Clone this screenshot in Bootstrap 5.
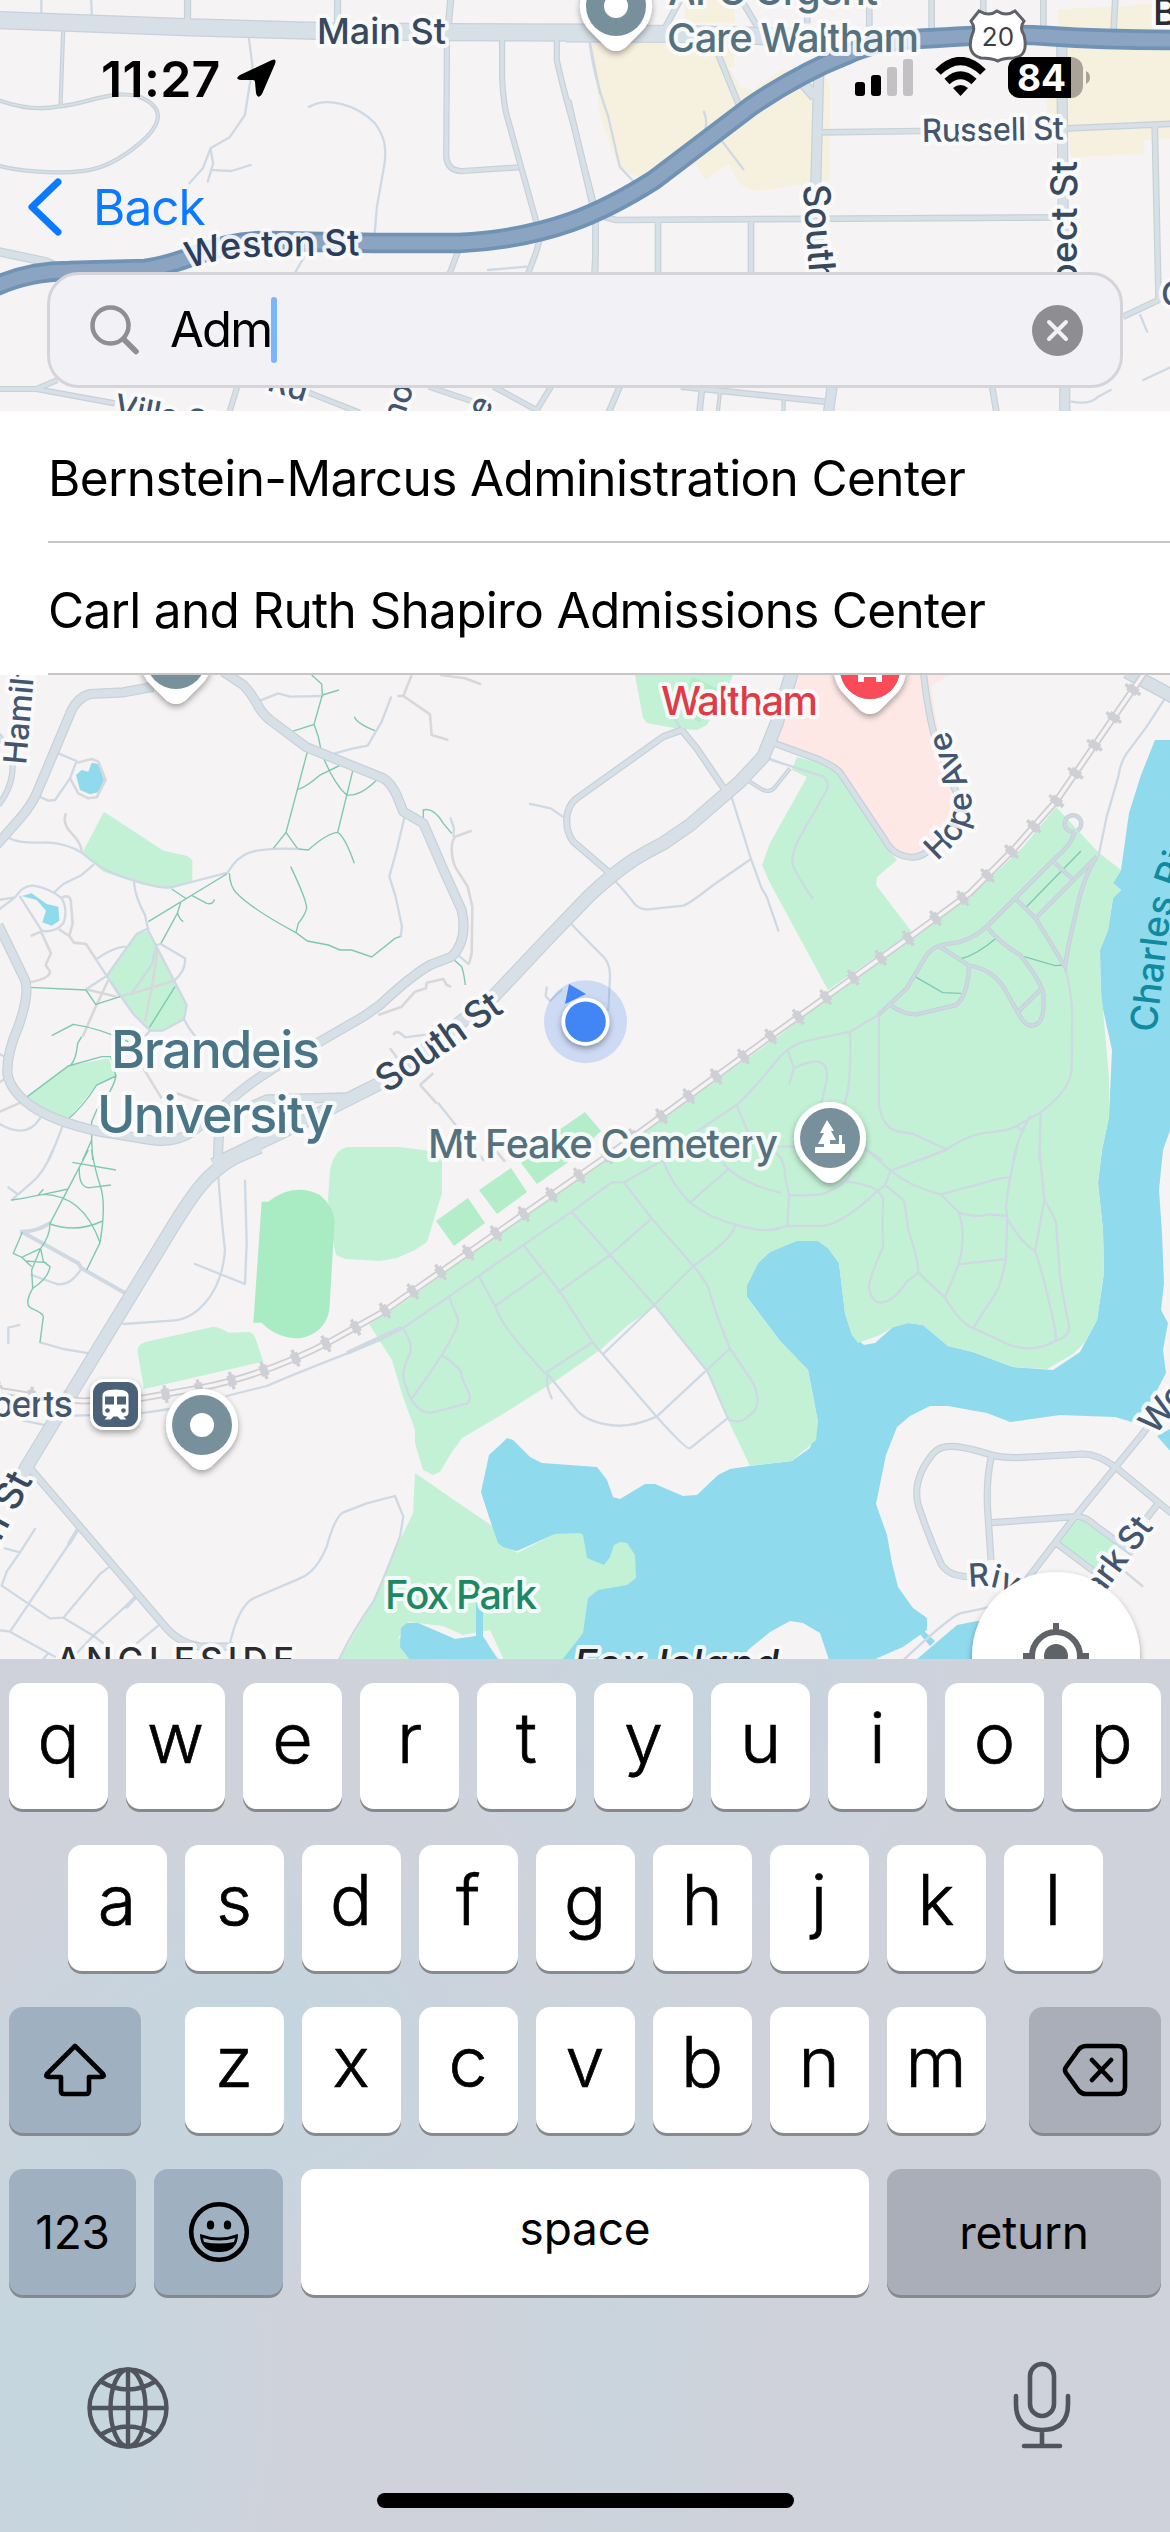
<!DOCTYPE html>
<html lang="en">
<head>
<meta charset="utf-8">
<meta name="viewport" content="width=device-width, initial-scale=1">
<title>Campus map search</title>
<link rel="stylesheet" href="https://cdn.jsdelivr.net/npm/bootstrap@5.3.0/dist/css/bootstrap.min.css">
<style>
body{font-family:Inter,"Liberation Sans",sans-serif;color:#000;background:#f5f3f4}
.screen{width:1170px;height:2532px}
.map-layer{left:0;top:0;width:1170px;height:1659px}
.statusbar{height:146px;padding:0 79px 0 101px}
.clock{font-size:50px;font-weight:600;letter-spacing:.3px;line-height:60px;margin-top:49px}
.batt{left:0;top:0;width:63px;font-size:37px;font-weight:700;line-height:41px;color:#fff;text-align:center}
.backbar{height:127px;padding:31px 0 0 27px}
.backlink{color:#0a7aff;font-size:49.5px;letter-spacing:-1px;line-height:60px;text-decoration:none;gap:30px}
.searchbox{height:116px;margin:-1px 47px 0;padding:0 37px 0 40px;border:3px solid #d5d4d9;border-radius:32px;background:#f2f1f6}
.query{font-size:49px;line-height:60px;letter-spacing:-1.8px;margin-left:30px}
.caret{width:6px;height:66px;border-radius:3px;background:#7bb5fc}
.results{margin-top:23px;background:#fff}
.results .list-group-item{height:132px;padding:3px 0 0;margin-left:48px;border:0;border-bottom:2px solid #c6c6c8!important;font-size:49.5px;line-height:60px;color:#000;background:#fff;display:flex;align-items:center;white-space:nowrap}
.results .list-group-item:nth-child(1) span{letter-spacing:-.62px}
.results .list-group-item:nth-child(2) span{letter-spacing:-.69px}
.keyboard{height:873px;padding:24px 9px 0;background:
 radial-gradient(ellipse 330px 290px at 690px 30px,#c7d5df 0,#c7d5df00 100%),
 radial-gradient(ellipse 330px 260px at 260px 400px,#c5d5df 20%,#c5d5df00 100%),
 radial-gradient(ellipse 260px 430px at 50px 720px,#c6d6df 20%,#c6d6df00 100%),
 radial-gradient(ellipse 170px 500px at 610px 600px,#c8d5dd 0,#c8d5dd00 100%),#d0d2db}
.krow{height:126px;margin-bottom:36px}
.keycap{width:99px;height:126px;border-radius:14px;background:#fff;box-shadow:0 3px 0 #868a8e;font-size:70px;font-weight:300;-webkit-text-stroke:.7px #000;line-height:1;padding-bottom:17px}
.kmod{background:#9fb1c1;padding-bottom:0}
.kgray{background:#a9aeb9;padding-bottom:0}
.wide{font-size:46px;font-weight:400;-webkit-text-stroke:0;letter-spacing:-.2px}
.homebar{left:377px;bottom:24px;width:417px;height:15px;border-radius:8px;background:#000}
.map-layer path,.map-layer polygon{vector-effect:non-scaling-stroke}
.lines{fill:none;stroke-linejoin:round;stroke-linecap:butt}
#roads path{stroke-width:calc(var(--w,7px) + var(--e,0px))}
.thin{fill:none;stroke:#cfd9e3;stroke-width:2.3;stroke-linejoin:round;stroke-linecap:round}
.walk{fill:none;stroke:#d8d8db;stroke-width:2.6;stroke-linejoin:round}
.trail{fill:none;stroke:#7fc9b0;stroke-width:1.4}
.lbl text{paint-order:stroke;stroke:#fbfcfd;stroke-opacity:.88;stroke-width:8px;stroke-linejoin:round;font-weight:500}
</style>
<script src="https://cdn.jsdelivr.net/npm/bootstrap@5.3.0/dist/js/bootstrap.bundle.min.js"></script>
</head>
<body class="m-0">
<main class="screen position-relative overflow-hidden d-flex flex-column">

<svg class="map-layer position-absolute" viewBox="0 0 1170 1659" overflow="hidden" aria-label="Map of Brandeis University">
<defs>
<filter id="sh" x="-30%" y="-30%" width="160%" height="160%"><feDropShadow dx="0" dy="3" stdDeviation="3" flood-color="#000" flood-opacity=".35"/></filter>
<g id="pin"><path d="M0-36A36 36 0 0 1 26 25L10 41Q0 49-10 41L-26 25A36 36 0 0 1 0-36Z" fill="#fff" filter="url(#sh)"/><circle r="30" fill="#78909c"/></g>
<g id="roads">
 <g transform="scale(.38268 .33333)">
  <path style="--w:17px" d="M-10 60L500 82 900 95 1600 98"/>
  <path style="--w:6px" d="M490-5V60M882-5V75M1178-5L1172 70"/>
  <path style="--w:3px" d="M165 95L158 320M-5 300Q80 335 150 320C240 310 280 270 360 288C430 320 430 370 360 435C290 500 240 520 140 517Q50 515-5 497"/>
  <path style="--w:5px" d="M1168 120L1166 470Q1170 515 1210 513L1355 502M1312 120V230Q1315 320 1330 370L1405 680M1455 120V180Q1470 260 1500 380L1555 625M1556 655V825M1200 745L1175 820M1412 712L1400 760 1380 820M-5 1167H95L150 1140M95 1167L300 1210M620 1160L600 1235M800 1175L940 1238M1120 1160L1250 1210M1290 1160L1410 1235M1440 1160L1400 1235"/>
  <path style="--w:8px" d="M-5 755L120 785 170 812"/>
 </g>
 <g transform="translate(570 0) scale(.38268 .33333)">
  <path style="--w:17px" d="M-10 100L300 102 640 112"/>
  <path style="--w:5.500px" d="M388 165L445 325M-5 300L60 620M67 655V760L64 820M230 665V820M473 665V820M90 650L120 660 1280 652M655 397L920 393M1300 385L1600 370M1528 378L1538 900 1445 950M945-5V95M1080-5V40M1237-5V90M1425-5L1420 100M620-5V70M782-5V80M290-5L250 80M445-5L490 80M130 1160L100 1240M345 1165L338 1240M290 1160L665 1205M1103 1160L1115 1240"/>
  <path style="--w:3px" d="M392 1175L386 1240M558 1200V1240"/>
  <path style="--w:10px" d="M650 215L640 650 660 830M605 245L640 290M1285 130L1290 830M685 1160L675 1240M1293 1160V1240"/>
 </g>
 <g transform="translate(0 660) scale(.33333)">
  <path style="--w:9px" d="M460 80L370 97 270 102Q235 112 215 150L110 400Q95 435 60 475L-10 555M670 35L730 75Q750 95 770 130Q785 160 810 180L920 262 1150 355Q1170 365 1190 405L1210 455 1270 490 1335 640 1385 750Q1405 840 1355 890L1290 915Q1230 950 1140 1035L1090 1070 960 1145 820 1225Q740 1275 680 1330M-5 795L75 960Q90 1000 55 1100Q20 1180 22 1240Q30 1290 90 1335Q160 1385 300 1415L450 1440Q520 1450 570 1420Q620 1385 680 1330Q650 1380 655 1540M740 1345L800 1318 1040 1312"/>
  <path style="--w:13px" d="M640 1515L900 1390 1060 1310 1160 1260 1480 1010 1640 840 1770 705Q1840 640 1900 600Q1940 575 1990 550L2070 495 2220 365 2290 290 2330 190 2375 40"/>
  <path style="--w:5px" d="M-5 435Q40 380 38 310M-5 225L20 260"/>
 </g>
 <g transform="translate(380 660) scale(.33333)">
  <path style="--w:6px" d="M905 210L850 230 590 415Q560 440 560 480Q560 520 580 545L690 640M905 210L950 265 1035 390"/>
  <path style="--w:3px" d="M1105 362L1140 385Q1170 405 1190 375L1230 325"/>
 </g>
 <g transform="translate(770 660) scale(.33333)">
  <path style="--w:6px" d="M460 35Q475 170 500 250L560 400M0 245L150 300Q205 325 215 345L345 540Q370 590 430 592Q460 590 490 560"/>
  <path style="--w:13px" d="M1070 35L1210 110"/>
 </g>
 <g transform="translate(0 1150) scale(.33333)">
  <path style="--w:13px" d="M780-10L700 25Q640 60 600 110Q560 160 500 260L80 950 50 1010"/>
  <path style="--w:7px" d="M90 955L500 1435Q540 1480 600 1490L700 1490"/>
  <path style="--w:6px" d="M656-5L650 60"/>
 </g>
 <g transform="translate(770 1150) scale(.33333)">
  <path style="--w:6px" d="M1180 770L1115 855 915 1100 770 1290M665 915Q600 895 560 890Q510 885 490 910Q440 970 440 1030Q440 1060 455 1095Q480 1170 515 1245Q540 1280 600 1280M665 915Q700 925 760 922L940 912Q980 912 1035 950L1205 1090M665 915Q645 1000 655 1110L663 1230M665 1118L915 1100Q940 1095 980 1130L1090 1210M860 1180L980 1270M1165 1060L1130 1105"/>
 </g>
</g>
<g id="lanes" transform="translate(770 660) scale(.33333)">
 <path d="M915 515Q900 560 860 590L735 715 650 800Q600 845 545 850Q490 855 470 885L410 985 325 1065M915 515A25 25 0 1 1 922 512M845 600L905 655M980 590L797 775 735 715M980 590Q940 650 920 750Q895 850 885 920L797 775M650 800Q690 850 750 885Q810 960 820 1000Q825 1080 800 1092Q770 1110 745 1060L700 980Q660 925 597 917L510 860M597 917Q595 1000 560 1035L440 1063Q400 1065 358 1033M745 1055L815 985"/>
</g>
<g id="hwy"><path d="M-4 286Q30 271 69 271L145 269C191 263 214 240 268 241L375 243 459 243Q520 240 571 222Q610 208 654 180L750 107Q800 73 846 55Q876 40 934 38Q1010 33 1048 36Q1106 40 1180 40"/></g>
<path id="rail" d="M-4 1390L40 1397 83 1401 143 1398 200 1388Q267 1375 333 1340L383 1312 603 1159 770 1037 910 937 970 893 1013 850 1057 800 1103 733 1143 675 1165 640"/>
<path id="pWeston" d="M189 269Q217 259 247 257L372 255"/>
<path id="pHope" d="M937 861C962 838 975 822 971 797C968 777 956 757 949 730Q945 715 943 695"/>
<path id="pRiver" d="M969 1587L985 1586Q1002 1588 1018 1598L1050 1620"/>
<path id="pCharles" d="M1156 1033L1169 925Q1180 870 1220 790"/>
</defs>
<rect width="1170" height="1659" fill="#f5f3f4"/>

<!-- commercial, hospital and park areas -->
<g transform="translate(570 0) scale(.38268 .33333)" fill="#f6f0df">
 <path d="M55 130H430V200H415L445 260 480 270 550 210H660L680 270 678 540 485 575 440 550 415 490 355 540 330 495 180 530 130 510 80 350ZM1275 28L1450 18 1600 0V415L1500 420V462L1310 472 1300 400 1250 390 1245 300 1280 280ZM300-5H430V70H300Z"/>
</g>
<path d="M797 675H950L931 686Q937 737 957 800Q943 847 917 857Q897 855 887 842L840 773 777 743Z" fill="#fde8e6"/>
<g fill="#c3f1d6">
 <g transform="translate(0 660) scale(.33333)"><path d="M312 455L490 572 560 587 577 600V662L510 687 430 675 310 635 247 578ZM410 822L445 812 560 1035 552 1078 487 1112H450L400 1062 320 948ZM75 1315L205 1218 325 1195 350 1248 290 1275 200 1383Z"/></g>
 <path d="M635 675H733L728 687 707 725 697 730 680 729 647 723 643 718ZM797 757L833 767 842 780 890 852 897 860 877 877 876 885 912 932 828 990 770 883 762 865 770 843 807 777 792 770Z"/>
 <path d="M328 1200L330 1170Q335 1147 350 1147H400L430 1151 442 1160V1193L427 1242 415 1250 397 1258 380 1261 345 1259 336 1255 333 1240Z"/>
 <g transform="translate(0 1150) scale(.33333)"><path d="M412 600Q415 580 440 575L640 530Q660 532 685 548L745 546Q762 548 768 570L790 635 432 717Z"/></g>
 <path d="M415 1473L457 1502 498 1530 517 1553 583 1520 640 1540V1583L595 1659H340L373 1602 400 1540 413 1513Z"/>
</g>
<g fill="#b3edc9"><path d="M692 677L717 688 700 723 680 710ZM468 1198L485 1223 454 1246 436 1221ZM511 1168L527 1192 497 1214 479 1190ZM585 1112L601 1131 567 1163 537 1184 521 1163 562 1128Z"/></g>
<path transform="translate(0 1150) scale(.33333)" d="M785 155H805Q880 95 960 135Q1000 170 1004 210L988 480Q975 550 900 565Q830 565 785 518H760Z" fill="#a9ebc3"/>

<!-- Charles River and ponds -->
<g fill="#90daee">
 <path d="M1172 740H1155L1141 775 1129 813 1121 870 1113 883 1121 890 1113 898 1108 930 1100 950 1101 1000 1112 1050 1109 1117 1102 1150 1098 1183 1103 1230 1104 1273 1097 1320 1080 1352 1053 1370 1013 1367 973 1352 948 1346 923 1325 908 1323 893 1327 875 1343 864 1345 852 1335 845 1313 839 1263 828 1248 818 1241 797 1240 770 1252 758 1263 747 1285V1297L780 1341 808 1370 818 1422 810 1448 792 1461 750 1466 730 1469 718 1475 697 1495 683 1496 655 1484H645L620 1499 613 1497 607 1480 597 1467 542 1463 530 1457 513 1440 507 1438 500 1445 489 1455 481 1492 490 1520 498 1543 503 1547 517 1551 555 1534 580 1533 583 1535 587 1558 604 1565 610 1557 614 1545 620 1542 627 1543 635 1555 636 1578 627 1585 598 1590 588 1598 583 1633 562 1660H743L748 1650 770 1632 790 1621 803 1623 820 1633 829 1660H873L903 1647 927 1630V1618L913 1608 898 1587 892 1563 887 1535 876 1504 886 1455 897 1427 910 1416 930 1406H948L987 1413 1010 1422 1060 1415 1115 1417 1132 1422 1153 1398 1166 1373 1163 1350 1168 1323 1161 1310 1164 1283 1162 1233 1159 1190 1163 1150 1172 1125Z"/>
 <path d="M1157 1436L1172 1428V1453ZM916 1660L957 1625 977 1621H1010V1660ZM919 1633L923 1630 935 1641 930 1646Z"/>
 <g transform="translate(0 660) scale(.33333)"><path d="M228 345L245 330 265 335 275 308 295 312 312 360 295 397 270 403 240 390ZM65 708L95 700 140 732 175 740 178 782 155 797 127 787 138 752 110 720Z"/></g>
</g>
<path d="M397 1640L408 1622 443 1626 463 1635 490 1630 504 1660H500L480 1636 455 1639 418 1623Z" fill="#f5f3f4"/>
<path d="M407 1623H418L455 1639 476 1636V1603H483V1636L498 1660H410L400 1647 401 1628Z" fill="#90daee"/>

<path d="M1056 807L1098 852 1121 870 1113 883 1121 890 1113 898 1108 930 1100 950V977L1109 1077V1117L1102 1150 1098 1183 1103 1230 1104 1273 1097 1320 1085 1342 1073 1354 1047 1369 1013 1367 973 1352 948 1346 923 1325 908 1323 893 1327 880 1335 858 1343 852 1335 845 1313 839 1263 828 1248 818 1241H797L770 1252 758 1263 747 1285V1297L780 1341 808 1370 818 1422 816 1440 792 1461 750 1466 728 1420 708 1372 677 1332 655 1307 628 1325 600 1350 557 1380 498 1417 462 1438 450 1455 440 1472 433 1475 423 1470 415 1443V1430L403 1397 392 1360 369 1324 400 1305 603 1161 780 1035 828 996 912 939 970 897 1023 847Z" fill="#c3f1d6"/>
<path transform="translate(770 1150) scale(.33333)" d="M865 1175L920 1110H945L1045 1190 985 1262Z" fill="#c3f1d6"/>

<!-- service roads, footpaths and trails -->
<g transform="scale(.38268 .33333)" class="thin"><path d="M108-5V40M238-5L240 48M650 110L660 200 640 345 600 412 550 445 530 505 495 550M550 445L557 490 543 545M555 510L605 513 655 495M807 321C850 290 930 310 980 370C1005 410 1010 440 1005 490L985 620 978 715M1540 120L1568 280M795 770L770 820M1275 810L1375 800"/></g>
<g transform="translate(570 0) scale(.38268 .33333)" class="thin"><path d="M52 130Q60 220 100 350L130 500 172 552M350 335Q362 370 350 400M390 412L453 508M1490 945L1508 995M1310 1205Q1360 1215 1380 1190L1413 1170M1498 1140L1600 1085"/></g>
<g transform="translate(0 660) scale(.33333)">
 <path class="thin" d="M175 280L230 303 210 355 165 420 145 422 118 410M28 535Q60 552 140 547Q200 550 245 578Q300 625 340 640Q400 662 450 675Q500 690 540 675L683 638Q710 590 750 577Q800 562 895 567M280 615L245 645 190 672 165 695M-5 720L45 712-5 750M45 712Q70 675 100 677Q150 685 185 715Q205 750 190 790Q165 820 125 812L60 710M402 668Q405 710 435 765L445 812 560 1035 552 1078 487 1112H450L400 1062 320 948 410 822 445 805M375 860Q340 862 288 898M320 948L258 988M470 855L482 852 555 895Q558 930 525 960M469 858L455 915 395 1000 360 1010M552 1078Q565 1105 585 1128M450 1112L430 1135M780 122L835 100 870 110 968 108M1173 112L1145 185 1103 257 1060 265 1005 280M-5 1180L15 1190M-5 1270L15 1255M-5 1390Q80 1440 120 1375M187 1400Q170 1450 145 1500M288 898L360 1010"/>
 <path class="walk" d="M232 308L275 297 295 305 317 360 290 412 265 415 235 400 210 355M198 460Q185 490 215 520Q245 550 245 578M185 713Q213 700 213 730L218 790 208 828 177 808M208 828L222 848 258 852 288 898M123 815L153 880 137 915 150 935Q150 955 88 967M92 828L123 815M473 870L455 985 435 1085M390 1003L522 962M325 960L285 1045 248 1130M258 988L350 1010M430 1225L485 1315M530 1300L600 1325M-5 1357L75 1322"/>
 <path class="trail" d="M935 45L965 72 967 105 942 193 875 215M967 105L1017 90M942 193L955 230 965 280Q1000 370 1040 405Q1080 410 1130 360M923 272L858 517 820 565M858 517L892 565M895 388Q920 380 960 345L1028 312M1060 325L1013 517Q980 520 925 570L895 567M1013 517Q1035 530 1063 610M1063 170Q1070 190 1125 212M872 620Q920 720 920 745Q915 765 895 790L888 818M688 640Q690 680 710 700Q760 750 888 818L922 843 985 855 1020 870H1055L1115 891 1185 835 1205 828M680 642L445 785M515 687L560 717M575 706L620 730Q640 735 643 718M542 728L532 760 483 850M532 757Q538 778 550 785M88 982L258 990 287 1033 360 1010M155 1127L220 1093Q300 1105 385 1145M525 980L448 1103M75 1315L205 1218 305 1190H332L348 1248 290 1275Q250 1340 197 1384M245 1130L233 1150Q228 1200 212 1215M348 1248Q340 1290 290 1350L275 1385V1440L278 1500M275 1440L248 1500"/>
</g>
<g transform="translate(380 660) scale(.33333)">
 <path class="thin" d="M885 178L905 210M450 432L512 445 548 470M705 662Q740 700 765 733Q780 750 805 748L910 737Q930 730 1000 675L1113 597M1055 412L1113 597 1145 685 1160 710 1195 812M577 795Q610 830 660 880Q692 905 690 950L685 1050M500 982L497 1008 510 1023 545 990M75 465L50 570 28 650 47 710 66 800 62 828M212 475L222 505 220 528M230 882L265 912M75 1132L165 1120M175 1330L310 1500M1165 295L1210 312M1200 1190Q1120 1290 1070 1335L950 1415 840 1490M1070 1335L1105 1420"/>
 <path class="walk" d="M95 45L70 108H52M70 108L150 163 155 225 205 240M180 45L255 55 303 73M275 512L225 530Q205 560 225 620L263 680 277 740 275 880 267 912M-5 1065L65 1040 105 995 138 985 140 968 190 957 200 975 213 980M40 1125Q50 1105 75 1132M30 1165L60 1205M120 1275L170 1330M120 1275L160 1240M350 1475L375 1505"/>
 <path class="trail" d="M130 480V450Q160 440 190 490L215 520M217 895L245 920Q252 940 256 975"/>
</g>
<g transform="translate(770 660) scale(.33333)">
 <path class="thin" d="M0 298L160 350Q180 370 170 390L85 540Q60 590 70 620Q90 660 127 715M1185 115L1130 200 1070 280Q1050 310 1045 350L1010 470 985 590M325 1065L240 1115 100 1145Q50 1160 0 1225M240 1115Q245 1280 222 1335M327 1065V1330Q335 1400 380 1413L430 1422 530 1468 450 1500M530 1468Q600 1420 660 1417L710 1410Q740 1400 815 1355Q900 1290 905 1230L907 1060Q905 1000 885 920M780 1370Q740 1440 730 1500M740 1400L760 1412M812 1355L808 1500M52 1168L72 1225 58 1270M72 1225Q180 1170 170 1260L155 1325M285 1465L335 1500M0 1460H80"/>
 <path class="trail" d="M933 573L768 742M763 890L855 917 885 915M680 833Q620 885 570 897M435 950L518 998 573 1000"/>
</g>
<g transform="translate(0 1150) scale(.33333)">
 <path class="thin" d="M160 0Q130 70 95 98L35 150M25 112L52 132M655 80Q665 220 675 300Q670 380 630 440Q580 510 515 512L370 522M735 92L740 280 735 402 585 342M95 375L170 402Q210 410 245 355M25 580V533L58 525M120 577L190 597 268 610M225 797L420 790 510 777M680 738L800 708Q900 665 1050 607T1200 535M70 812L140 826M105 1137L60 1207 20 1265 5 1307 150 1405 190 1403 280 1457 310 1480M15 1195L60 1207M232 1140L205 1185 30 1445M-5 1440L30 1445 165 1520M325 1253L300 1272 190 1403M405 1343L280 1457 230 1510M475 1427L410 1480M690 1480Q715 1370 760 1345L900 1285Q950 1265 980 1190Q1005 1100 1030 1087L1100 1060 1185 1038 1210 1100 1200 1160Q1150 1290 1120 1355Q1060 1440 1018 1527M130 1527L145 1510"/>
 <path class="thin" style="stroke-width:4" d="M65 245Q110 245 148 220M65 245L235 340 245 355 380 432M1045 607L1200 535M232 1140L208 1180M405 1343L380 1370"/>
 <path class="trail" d="M265 0L205 115 150 220Q150 260 122 295L65 322 40 310 67 247M275 0Q285 60 300 105Q320 160 300 278L260 360M217 37L348 60M238 50Q235 115 270 113L333 105M35 150Q70 145 130 133L205 117M115 135L130 118M130 133Q250 135 300 278M150 222Q230 250 308 213M122 295L95 360 98 415Q70 465 95 475Q130 490 130 500L120 577M122 295L130 335 150 350Q145 385 98 415M80 333L140 338M65 322L95 350"/>
</g>
<g transform="translate(380 1150) scale(.33333)" class="thin"><path d="M-5 572L68 535 575 185 695 97H732L850 30M68 535Q100 580 90 610Q60 670 75 700Q100 790 155 788L262 760Q275 745 265 725Q245 690 243 665Q225 640 185 615M208 443L235 510Q230 560 98 742M297 378L345 468Q360 510 400 560Q450 620 495 670L635 578M345 468L485 370M430 285L540 425 640 580 830 800Q920 900 930 895L1045 803M535 427L690 315 815 205 732 97M575 185L823 465M815 205L940 348Q985 400 990 430Q1010 500 1050 595L1120 700Q1150 770 1110 795Q1080 825 1045 808L983 665 823 465 940 348Q1060 265 1065 225M850 35Q880 110 930 158Q990 205 1065 223Q1150 250 1200 235M930 158L1045 57Q1110 110 1200 127M1045 57L1030 40M823 465L670 612M1050 595L830 800Q750 835 690 825Q620 815 590 780L503 672Q495 700 515 745"/></g>
<g transform="translate(770 1150) scale(.33333)" class="thin"><path d="M20 10Q45 30 45 80L57 135 52 228 0 240M57 135Q150 140 175 125Q250 90 240 60M52 228H160Q220 220 320 125L345 105 362 62 530 0M290 0L362 62Q420 110 512 133L690 85 720 82M230 95Q330 105 340 150Q335 220 340 290Q290 400 298 420Q310 460 335 458Q370 455 410 395L445 368Q445 330 415 240Q405 160 400 150Q390 140 345 105M445 368L525 443Q565 510 600 530L720 585Q790 610 855 573Q900 560 897 525Q870 400 868 350L858 220Q850 190 823 152L808 0M512 133L567 187Q590 260 565 345L525 443M567 187Q620 205 655 193L712 198M740 0Q715 90 708 170L712 198 708 327 565 343M708 327Q690 410 680 425L612 530M712 205Q750 275 795 303L823 152M795 303Q820 370 857 545V573M1065 1265L1117 1308M400 1530Q540 1400 570 1390L655 1372"/></g>
<use href="#lanes" fill="none" stroke="#c4d1d8" stroke-width="4.4"/><use href="#lanes" fill="none" stroke="#cdd8e1" stroke-width="2.6"/>

<!-- streets, railway and highway, each as casing plus fill -->
<use href="#roads" class="lines" stroke="#c6d1d8" style="--e:1.2px"/>
<use href="#roads" class="lines" stroke="#d7e0e7" style="--e:-1.2px"/>
<g fill="none"><use href="#rail" stroke="#cfcfd2" stroke-width="7"/><use href="#rail" stroke="#f5f3f4" stroke-width="3.4"/><use href="#rail" stroke="#cfd0d5" stroke-width="18" stroke-dasharray="3.4 30.4"/><use href="#rail" stroke="#cfd0d5" stroke-width="11" stroke-dasharray="8 25.8" stroke-dashoffset="2.3"/>
<use href="#hwy" stroke="#6f92b5" stroke-width="20.5"/><use href="#hwy" stroke="#8ba4c1" stroke-width="13"/></g>

<!-- labels -->
<g class="lbl">
 <g fill="#38495d">
 <text x="317" y="44" font-size="36" textLength="129">Main St</text>
 <text font-size="36" fill="#2c3d5c"><textPath href="#pWeston" textLength="172">Weston St</textPath></text>
 <text transform="translate(803 185) rotate(86)" font-size="37" textLength="100">South</text>
 <text transform="translate(1077 161) rotate(-90)" font-size="37" text-anchor="end">Prospect St</text>
 <text transform="translate(387 1094) rotate(-35)" font-size="38" textLength="144">South St</text>
 <text transform="translate(33 1480) rotate(-62)" font-size="38" text-anchor="end">Main St</text>
 <text x="73" y="1417" font-size="36" fill="#44566a" text-anchor="end" textLength="123">Roberts</text>
 </g>
 <g fill="#44566f" font-size="32">
 <text transform="translate(922 142) rotate(-1)" textLength="142">Russell St</text>
 <text transform="translate(113 416) rotate(11)" textLength="104">Villa St</text>
 <text transform="translate(266 390) rotate(17)">Rd</text>
 <text transform="translate(402 424) rotate(-72)">no</text>
 <text transform="translate(468 452) rotate(-62)">oke</text>
 <text x="1161" y="306" font-size="34">Ch</text>
 <text><textPath href="#pHope" textLength="147">Hope Ave</textPath></text>
 <text transform="translate(26 765) rotate(-85)">Hamilton</text>
 <text transform="translate(1155 1436) rotate(-51)" font-size="34">Woerd</text>
 <text transform="translate(1154 1527) rotate(-53)" font-size="34" text-anchor="end" textLength="112">Park St</text>
 <text><textPath href="#pRiver">River</textPath></text>
 </g>
 <g fill="#56717e" font-size="40">
 <text x="668" y="5" textLength="210">AFC Urgent</text>
 <text x="667" y="52" textLength="252">Care Waltham</text>
 <text x="428" y="1158" textLength="350">Mt Feake Cemetery</text>
 </g>
 <g fill="#4a7587" font-size="52"><text x="111" y="1068" textLength="209">Brandeis</text><text x="97" y="1133" textLength="237">University</text></g>
 <text x="661" y="715" font-size="40" fill="#df3c48" textLength="157">Waltham</text>
 <text x="385" y="1609" font-size="40" fill="#1e8862" textLength="152">Fox Park</text>
 <text font-size="37" fill="#0f8a9f" style="stroke:none"><textPath href="#pCharles">Charles River</textPath></text>
 <text x="1153" y="25" font-size="37" fill="#2b2c33">B</text>
 <text x="56" y="1673" font-size="35" fill="#2c2c31" textLength="238">ANGLESIDE</text>
 <text x="574" y="1678" font-size="39" fill="#202228" font-style="italic" textLength="205">Fox Island</text>
</g>

<!-- US 20 shield -->
<g><path d="M979 11Q989 17 997 11Q1006 17 1015 11L1024 21Q1019 28 1024 35Q1029 56 1014 58Q1003 58 998 61Q991 58 981 58Q966 54 972 35Q976 28 971 21Z" fill="#fff" stroke="#606268" stroke-width="3"/><text x="998" y="46" font-size="26" fill="#3d3e44" text-anchor="middle">20</text></g>

<!-- markers -->
<use href="#pin" x="616" y="6"/><circle cx="616" cy="6" r="12" fill="#fff"/>
<use href="#pin" x="176" y="659"/>
<g transform="translate(870 669)"><use href="#pin"/><circle r="30" fill="#fb4a58"/><path d="M-12-15H-6V2H6V-15H12V13H6V8H-6V13H-12Z" fill="#fff"/></g>
<g transform="translate(830 1138)"><use href="#pin"/><path d="M-3-18L4-7H1L6 2H0V6H9V-3H12V6H15V15H-15V9H-6V6H-12L-6-5H-10Z" fill="#fff"/></g>
<use href="#pin" x="202" y="1425"/><circle cx="202" cy="1425" r="12" fill="#fff"/>
<g transform="translate(115.500 1404.500)"><rect x="-25.500" y="-25.500" width="51" height="51" rx="14" fill="#fff" filter="url(#sh)"/><rect x="-22.500" y="-22.500" width="45" height="45" rx="11" fill="#4a6177"/><path d="M-13-9Q-13-15 0-15T13-9V8Q13 12 8 12L11 15H5L2 12H-2L-5 15H-11L-8 12Q-13 12-13 8Z" fill="#fff"/><path d="M-10.500-8H-1.500V0H-10.500ZM1.500-8H10.500V0H1.500Z" fill="#4a6177"/><circle cx="-8" cy="6" r="2.300" fill="#4a6177"/><circle cx="8" cy="6" r="2.300" fill="#4a6177"/></g>
<circle cx="585.500" cy="1021.700" r="41.500" fill="#4285f4" opacity=".22"/>
<path d="M569 984L586 994 565 1004Z" fill="#4285f4"/><circle cx="585.500" cy="1021.700" r="24" fill="#fff" filter="url(#sh)"/><circle cx="585.500" cy="1021.700" r="20.300" fill="#4285f4"/>
<g transform="translate(1056 1656)"><circle r="84" fill="#fff" filter="url(#sh)"/><circle r="24" fill="none" stroke="#5f6368" stroke-width="6"/><circle r="12" fill="#5f6368"/><path d="M0-33V-24M0 24V33M-33 0H-24M24 0H33" stroke="#5f6368" stroke-width="6"/></g>
</svg>

<header class="position-relative">
 <div class="statusbar d-flex align-items-start">
  <span class="clock">11:27</span>
  <svg class="ms-3" style="margin-top:59px" width="40" height="39" viewBox="0 0 40 39"><path d="M3 16L35 1Q40-1 38 5L25 35Q21 41 19 34L18 23Q18 21 16 21L4 21Q-3 20 3 16Z"/></svg>
  <div class="ms-auto d-flex" style="margin-top:57px">
   <svg width="58" height="41" viewBox="0 0 58 41"><rect y="25" width="10" height="14" rx="3"/><rect x="16" y="18" width="10" height="21" rx="3"/><g fill="#c3c1c3"><rect x="32" y="10" width="10" height="29" rx="3"/><rect x="48" y="2" width="10" height="37" rx="3"/></g></svg>
   <svg style="margin-left:22px" width="51" height="41" viewBox="0 0 51 41"><path d="M3 15Q25.500-7 48 15" fill="none" stroke="#000" stroke-width="8"/><path d="M12 24.500Q25.500 12 39 24.500" fill="none" stroke="#000" stroke-width="7.500"/><path d="M18 31Q25.500 25 33 31L25.500 39Z"/></svg>
   <div class="position-relative" style="margin-left:22px"><svg width="83" height="41" viewBox="0 0 83 41" class="d-block"><rect width="75" height="41" rx="12" fill="#aba399"/><path d="M63 0H12A12 12 0 0 0 0 12V29A12 12 0 0 0 12 41H63Z"/><path d="M78 14Q82 16 82 20.500T78 27Z" fill="#aba399"/></svg><span class="batt position-absolute ps-1">84</span></div>
  </div>
 </div>
 <div class="backbar">
  <a href="#" class="backlink d-inline-flex align-items-center"><svg width="36" height="58" viewBox="0 0 36 58"><path d="M31 4L5 29L31 54" fill="none" stroke="#0a7aff" stroke-width="7" stroke-linecap="round" stroke-linejoin="round"/></svg>Back</a>
 </div>
</header>

<div class="searchbox position-relative d-flex align-items-center">
 <svg width="50" height="50" viewBox="0 0 50 50"><circle cx="20.500" cy="20.500" r="18" fill="none" stroke="#8e8e93" stroke-width="4.500"/><path d="M33.500 34L46 46.500" stroke="#8e8e93" stroke-width="5.500" stroke-linecap="round"/></svg>
 <span class="query">Adm</span><span class="caret"></span>
 <svg class="ms-auto" width="51" height="51" viewBox="0 0 51 51"><circle cx="25.500" cy="25.500" r="25.500" fill="#8e8d92"/><path d="M17 17L34 34M34 17L17 34" stroke="#f2f1f6" stroke-width="4" stroke-linecap="round"/></svg>
</div>

<div class="results list-group list-group-flush position-relative rounded-0">
 <div class="list-group-item"><span>Bernstein-Marcus Administration Center</span></div>
 <div class="list-group-item"><span>Carl and Ruth Shapiro Admissions Center</span></div>
</div>

<section class="keyboard mt-auto position-relative">
 <div class="krow d-flex justify-content-between">
  <div class="keycap d-flex align-items-center justify-content-center">q</div><div class="keycap d-flex align-items-center justify-content-center">w</div><div class="keycap d-flex align-items-center justify-content-center">e</div><div class="keycap d-flex align-items-center justify-content-center">r</div><div class="keycap d-flex align-items-center justify-content-center">t</div><div class="keycap d-flex align-items-center justify-content-center">y</div><div class="keycap d-flex align-items-center justify-content-center">u</div><div class="keycap d-flex align-items-center justify-content-center">i</div><div class="keycap d-flex align-items-center justify-content-center">o</div><div class="keycap d-flex align-items-center justify-content-center">p</div>
 </div>
 <div class="krow d-flex justify-content-center" style="gap:18px">
  <div class="keycap d-flex align-items-center justify-content-center">a</div><div class="keycap d-flex align-items-center justify-content-center">s</div><div class="keycap d-flex align-items-center justify-content-center">d</div><div class="keycap d-flex align-items-center justify-content-center">f</div><div class="keycap d-flex align-items-center justify-content-center">g</div><div class="keycap d-flex align-items-center justify-content-center">h</div><div class="keycap d-flex align-items-center justify-content-center">j</div><div class="keycap d-flex align-items-center justify-content-center">k</div><div class="keycap d-flex align-items-center justify-content-center">l</div>
 </div>
 <div class="krow d-flex justify-content-between">
  <div class="keycap kmod d-flex align-items-center justify-content-center" style="width:132px"><svg width="64" height="54" viewBox="0 0 64 54"><path d="M32 3L60 31Q62 34 58 34H46V48Q46 51 43 51H21Q18 51 18 48V34H6Q2 34 4 31Z" fill="none" stroke="#000" stroke-width="4.600" stroke-linejoin="round"/></svg></div>
  <div class="d-flex" style="gap:18px">
  <div class="keycap d-flex align-items-center justify-content-center">z</div><div class="keycap d-flex align-items-center justify-content-center">x</div><div class="keycap d-flex align-items-center justify-content-center">c</div><div class="keycap d-flex align-items-center justify-content-center">v</div><div class="keycap d-flex align-items-center justify-content-center">b</div><div class="keycap d-flex align-items-center justify-content-center">n</div><div class="keycap d-flex align-items-center justify-content-center">m</div>
  </div>
  <div class="keycap kgray d-flex align-items-center justify-content-center" style="width:132px"><svg width="66" height="54" viewBox="0 0 66 54"><path d="M24 3H56Q63 3 63 10V44Q63 51 56 51H24Q20 51 17 48L4 30Q2 27 4 24L17 6Q20 3 24 3ZM30 17L49 37M49 17L30 37" fill="none" stroke="#000" stroke-width="4.600" stroke-linejoin="round" stroke-linecap="round"/></svg></div>
 </div>
 <div class="krow d-flex" style="gap:18px">
  <div class="keycap kmod wide d-flex align-items-center justify-content-center" style="width:127px">123</div>
  <div class="keycap kmod d-flex align-items-center justify-content-center" style="width:129px"><svg width="62" height="62" viewBox="0 0 62 62"><circle cx="31" cy="31" r="27.800" fill="none" stroke="#000" stroke-width="4.600"/><ellipse cx="22.500" cy="24" rx="3.700" ry="4.500"/><ellipse cx="39.500" cy="24" rx="3.700" ry="4.500"/><path d="M12 33Q31 40 50 33Q50 51 31 51T12 33Z"/><path d="M15 37Q31 42 47 37L46 41Q31 44 16 41Z" fill="#9fb1c1"/></svg></div>
  <div class="keycap wide d-flex align-items-center justify-content-center" style="width:568px;padding-bottom:8px">space</div>
  <div class="keycap kgray wide d-flex align-items-center justify-content-center" style="width:274px">return</div>
 </div>
 <div class="d-flex justify-content-between align-items-center" style="padding:36px 90px 0 78px">
  <svg width="82" height="82" viewBox="0 0 82 82" fill="none" stroke="#50555d" stroke-width="4.400"><circle cx="41" cy="41" r="38.500"/><ellipse cx="41" cy="41" rx="17.500" ry="38.500"/><path d="M41 2V80M2 41H80M13 14Q41 31 69 14M13 68Q41 51 69 68"/></svg>
  <svg width="58" height="88" viewBox="0 0 58 88" fill="none" stroke="#50555d" stroke-width="4.600" stroke-linecap="round" style="margin-top:-6px"><rect x="17" y="3" width="24" height="52" rx="12"/><path d="M3 35V43Q3 69 29 69T55 43V35M29 69V84M11 85H47"/></svg>
 </div>
 <div class="homebar position-absolute"></div>
</section>
</main>
</body>
</html>
